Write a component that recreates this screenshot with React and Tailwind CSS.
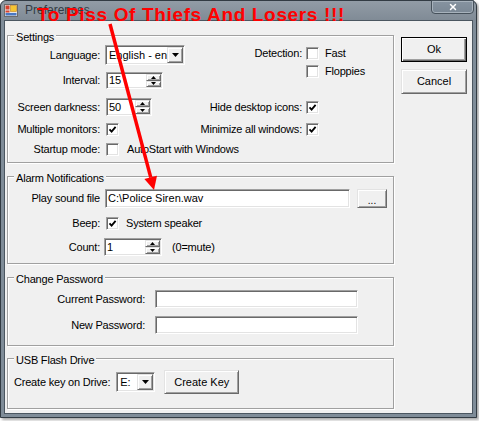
import { X } from 'lucide-react'

const sunken =
  'bg-white border border-t-[#a0a0a0] border-l-[#a0a0a0] border-r-white border-b-white shadow-[inset_1px_1px_0_#696969,inset_-1px_-1px_0_#e3e3e3]'
const raised =
  'bg-[#f0f0f0] border border-t-[#e3e3e3] border-l-[#e3e3e3] border-r-[#696969] border-b-[#696969] shadow-[inset_1px_1px_0_#fff,inset_-1px_-1px_0_#a0a0a0]'

function Tri({ up, big }) {
  if (big) {
    return (
      <svg width="7" height="4" viewBox="0 0 7 4">
        <polygon points="0,0 7,0 3.5,4" fill="#000" />
      </svg>
    )
  }
  return (
    <svg width="5" height="3" viewBox="0 0 5 3">
      <polygon points={up ? '0,3 5,3 2.5,0' : '0,0 5,0 2.5,3'} fill="#000" />
    </svg>
  )
}

function Check({ on }) {
  return (
    <div className={`w-[13px] h-[13px] shrink-0 flex items-center justify-center ${sunken}`}>
      {on && (
        <svg width="9" height="9" viewBox="0 0 9 9">
          <path d="M1.5 4.3 L3.6 6.6 L7.6 1.8" stroke="#000" strokeWidth="1.8" fill="none" />
        </svg>
      )}
    </div>
  )
}

function Spin({ className, value }) {
  return (
    <div className={`flex p-[1px] ${sunken} ${className}`}>
      <div className="flex-1 pl-[1px] flex items-center tracking-normal">{value}</div>
      <div className="w-[15px] flex flex-col">
        <div className={`flex-1 flex items-center justify-center ${raised}`}>
          <Tri up />
        </div>
        <div className={`flex-1 flex items-center justify-center ${raised}`}>
          <Tri />
        </div>
      </div>
    </div>
  )
}

function Combo({ className, value }) {
  return (
    <div className={`flex p-[1px] ${sunken} ${className}`}>
      <div className="flex-1 min-w-0 pl-[2px] flex items-center whitespace-nowrap overflow-hidden tracking-normal">
        {value}
      </div>
      <div className={`w-[16px] shrink-0 flex items-center justify-center ${raised}`}>
        <Tri big />
      </div>
    </div>
  )
}

function Group({ title, className, children }) {
  return (
    <div className={`border border-[#a0a0a0] shadow-[inset_1px_1px_0_#fff,1px_1px_0_#fff] ${className}`}>
      <div className="-mt-[5px] ml-[6px] px-[2px] w-fit bg-[#f0f0f0] leading-[13px]">{title}</div>
      {children}
    </div>
  )
}

function Label({ className, children }) {
  return <span className={`shrink-0 text-right whitespace-nowrap ${className}`}>{children}</span>
}

export default function App() {
  return (
    <div className="relative w-[479px] h-[421px] bg-white overflow-hidden font-['Liberation_Sans',Arial,sans-serif] text-[11px] leading-[13px] tracking-[-0.2px] text-black">
      {/* window */}
      <div className="w-[477px] h-[418px] flex flex-col border border-[#323b43] rounded-t-[6px] bg-[#7f8c98] shadow-[2px_2px_3px_rgba(0,0,0,0.35)]">
        {/* title bar */}
        <div className="h-[20px] flex items-start pl-[3px] rounded-t-[6px] bg-[linear-gradient(#929ca6,#7f8a95)]">
          <svg className="mt-[2px] shrink-0" width="14" height="14" viewBox="0 0 14 14">
            <rect x="0.5" y="1.5" width="13" height="12" fill="#e8e8e8" stroke="#6b6b6b" />
            <rect x="1.5" y="2.5" width="4" height="4" fill="#d8412c" />
            <rect x="6.5" y="2.5" width="6" height="6" fill="#f5c531" stroke="#c7861a" strokeWidth="0.6" />
            <rect x="1.5" y="7.5" width="4" height="2" fill="#d8412c" />
            <rect x="1.5" y="10" width="11" height="2.5" fill="#4a78c2" />
          </svg>
          <span className="ml-[7px] mt-[3px] text-[12px] tracking-normal text-[#333c44]">Preferences</span>
          <div className="ml-auto mr-[2px] -mt-[1px] w-[43px] h-[14px] rounded-b-[4px] border border-[#46515b] shadow-[inset_0_0_0_1px_#a7b2bc] bg-[linear-gradient(#8693a0,#7b8895)] flex items-center justify-center">
            <X size={10} strokeWidth={3.5} color="#fff" />
          </div>
        </div>

        {/* client area */}
        <div className="mx-[4px] h-[392px] flex pt-[14px] pl-[2px] bg-[#f0f0f0] shadow-[0_0_0_1px_#4b5660]">
          <div className="w-[387px] flex flex-col">
            <Group title="Settings" className="h-[128px]">
              <div className="flex">
                <div className="w-[190px] flex flex-col">
                  <div className="mt-[1px] h-[20px] flex items-center">
                    <Label className="w-[92px]">Language:</Label>
                    <Combo className="ml-[5px] w-[80px] h-[20px]" value="English - en" />
                  </div>
                  <div className="mt-[7px] h-[17px] flex items-center">
                    <Label className="w-[92px]">Interval:</Label>
                    <Spin className="ml-[6px] w-[57px] h-[17px]" value="15" />
                  </div>
                  <div className="mt-[9px] h-[18px] flex items-center">
                    <Label className="w-[92px]">Screen darkness:</Label>
                    <Spin className="ml-[6px] w-[46px] h-[18px]" value="50" />
                  </div>
                  <div className="mt-[7px] h-[13px] flex items-center">
                    <Label className="w-[92px]">Multiple monitors:</Label>
                    <div className="ml-[6px]">
                      <Check on />
                    </div>
                  </div>
                  <div className="mt-[7px] h-[13px] flex items-center">
                    <Label className="w-[92px]">Startup mode:</Label>
                    <div className="ml-[6px]">
                      <Check />
                    </div>
                    <span className="ml-[8px] whitespace-nowrap">AutoStart with Windows</span>
                  </div>
                </div>
                <div className="flex flex-col">
                  <div className="mt-[3px] h-[13px] flex items-center">
                    <Label className="w-[104px]">Detection:</Label>
                    <div className="ml-[4px]">
                      <Check />
                    </div>
                    <span className="ml-[6px]">Fast</span>
                  </div>
                  <div className="mt-[5px] h-[13px] flex items-center">
                    <Label className="w-[104px]"></Label>
                    <div className="ml-[4px]">
                      <Check />
                    </div>
                    <span className="ml-[6px]">Floppies</span>
                  </div>
                  <div className="mt-[23px] h-[13px] flex items-center">
                    <Label className="w-[104px]">Hide desktop icons:</Label>
                    <div className="ml-[4px]">
                      <Check on />
                    </div>
                  </div>
                  <div className="mt-[9px] h-[13px] flex items-center">
                    <Label className="w-[104px]">Minimize all windows:</Label>
                    <div className="ml-[4px]">
                      <Check on />
                    </div>
                  </div>
                </div>
              </div>
            </Group>

            <Group title="Alarm Notifications" className="mt-[13px] h-[88px]">
              <div className="mt-[4px] h-[19px] flex items-center">
                <Label className="w-[92px]">Play sound file</Label>
                <div className={`ml-[5px] w-[245px] h-[19px] pl-[2px] flex items-center tracking-normal ${sunken}`}>
                  C:\Police Siren.wav
                </div>
                <div className={`ml-[7px] w-[30px] h-[19px] flex items-end justify-center pb-[1px] text-[10px] leading-[10px] tracking-normal ${raised}`}>
                  ...
                </div>
              </div>
              <div className="mt-[9px] h-[13px] flex items-center">
                <Label className="w-[92px]">Beep:</Label>
                <div className="ml-[6px]">
                  <Check on />
                </div>
                <span className="ml-[7px]">System speaker</span>
              </div>
              <div className="mt-[8px] h-[18px] flex items-center">
                <Label className="w-[92px]">Count:</Label>
                <Spin className="ml-[4px] w-[58px] h-[18px]" value="1" />
                <span className="ml-[10px]">(0=mute)</span>
              </div>
            </Group>

            <Group title="Change Password" className="mt-[13px] h-[69px]">
              <div className="mt-[4px] h-[18px] flex items-center">
                <Label className="w-[137px]">Current Password:</Label>
                <div className={`ml-[10px] w-[203px] h-[18px] ${sunken}`}></div>
              </div>
              <div className="mt-[8px] h-[18px] flex items-center">
                <Label className="w-[137px]">New Password:</Label>
                <div className={`ml-[10px] w-[203px] h-[18px] ${sunken}`}></div>
              </div>
            </Group>

            <Group title="USB Flash Drive" className="mt-[12px] h-[51px]">
              <div className="mt-[3px] h-[24px] flex items-center pl-[6px]">
                <Label>Create key on Drive:</Label>
                <Combo className="ml-[6px] w-[39px] h-[20px]" value="E:" />
                <div className={`ml-[9px] w-[75px] h-[24px] flex items-center justify-center tracking-normal ${raised}`}>
                  Create Key
                </div>
              </div>
            </Group>
          </div>

          <div className="ml-[7px] mt-[2px] flex flex-col">
            <div className="w-[66px] h-[25px] flex items-center justify-center tracking-normal bg-[#f0f0f0] border border-black shadow-[inset_1px_1px_0_#fff,inset_-1px_-1px_0_#696969,inset_-2px_-2px_0_#a0a0a0]">
              Ok
            </div>
            <div className={`mt-[7px] w-[66px] h-[25px] flex items-center justify-center tracking-normal ${raised}`}>
              Cancel
            </div>
          </div>
        </div>
        <div className="h-[4px]"></div>
      </div>

      {/* red annotation */}
      <div className="absolute left-[37px] top-[5px] text-[19px] leading-[19px] font-bold tracking-[0.65px] text-[#ff0000] whitespace-nowrap">
        To Piss Of Thiefs And Losers !!!
      </div>
      <svg className="absolute left-0 top-0 pointer-events-none" width="479" height="421" viewBox="0 0 479 421">
        <line x1="110" y1="24" x2="150.8" y2="177.6" stroke="#ff0000" strokeWidth="3.5" />
        <polygon points="154,190 157,175.8 144.4,179.1" fill="#ff0000" />
      </svg>
    </div>
  )
}
